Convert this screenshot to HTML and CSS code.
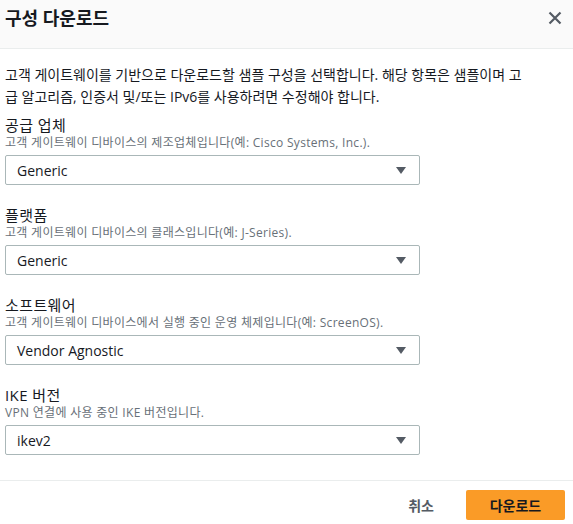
FILE: index.html
```html
<!DOCTYPE html>
<html lang="ko">
<head>
<meta charset="utf-8">
<link rel="stylesheet" href="styles.css">
</head>
<body>
<div class="modal">
  <div class="header">
    <h1 class="title">구성 다운로드</h1>
    <button class="close" aria-label="닫기">
      <svg width="14" height="14" viewBox="0 0 14 14"><path d="M1.5 1.5 L12.5 12.5 M12.5 1.5 L1.5 12.5" stroke="#545b64" stroke-width="2.2" fill="none"/></svg>
    </button>
  </div>
  <div class="content">
    <p class="desc">고객 게이트웨이를 기반으로 다운로드할 샘플 구성을 선택합니다. 해당 항목은 샘플이며 고급 알고리즘, 인증서 및/또는 IPv6를 사용하려면 수정해야 합니다.</p>
    <div class="field">
      <div class="label">공급 업체</div>
      <div class="hint">고객 게이트웨이 디바이스의 제조업체입니다(예: Cisco Systems, Inc.).</div>
      <div class="select"><span>Generic</span><span class="arrow"></span></div>
    </div>
    <div class="field">
      <div class="label">플랫폼</div>
      <div class="hint">고객 게이트웨이 디바이스의 클래스입니다(예: J-Series).</div>
      <div class="select"><span>Generic</span><span class="arrow"></span></div>
    </div>
    <div class="field">
      <div class="label">소프트웨어</div>
      <div class="hint">고객 게이트웨이 디바이스에서 실행 중인 운영 체제입니다(예: ScreenOS).</div>
      <div class="select"><span>Vendor Agnostic</span><span class="arrow"></span></div>
    </div>
    <div class="field">
      <div class="label">IKE 버전</div>
      <div class="hint">VPN 연결에 사용 중인 IKE 버전입니다.</div>
      <div class="select"><span>ikev2</span><span class="arrow"></span></div>
    </div>
  </div>
  <div class="footer">
    <button class="btn-link">취소</button>
    <button class="btn-primary">다운로드</button>
  </div>
</div>
</body>
</html>
```

FILE: styles.css
```css
* { box-sizing: border-box; }
body {
  margin: 0;
  background: #fff;
  color: #16191f;
  font-family: "Open Sans", "Noto Sans CJK KR", sans-serif;
}
.modal { width: 573px; }
.header {
  height: 49px;
  background: #fafafa;
  border-bottom: 1px solid #eaeded;
  display: flex;
  align-items: center;
  justify-content: space-between;
  padding: 0 11px 0 5px;
}
.title {
  margin: 0;
  font-size: 18px;
  font-weight: 700;
  line-height: 24px;
  margin-top: -12px;
}
.close {
  border: 0;
  background: transparent;
  padding: 0;
  width: 14px;
  height: 14px;
  display: flex;
  margin-top: -12px;
}
.content {
  padding: 15px 5px 0;
  height: 431px;
}
.desc {
  margin: 0 0 7px;
  max-width: 528px;
  font-size: 14px;
  line-height: 22px;
}
.field { margin-bottom: 20px; }
.label { font-size: 15px; line-height: 20px; letter-spacing: 0.4px; }
.hint { font-size: 12px; line-height: 16px; color: #687078; margin-bottom: 4px; letter-spacing: 0.3px; }
.select {
  width: 415px;
  height: 30px;
  border: 1px solid #aab7b8;
  border-radius: 2px;
  display: flex;
  align-items: center;
  justify-content: space-between;
  padding: 0 13px 0 11px;
  font-size: 14px;
}
.arrow {
  width: 0;
  height: 0;
  border-left: 5px solid transparent;
  border-right: 5px solid transparent;
  border-top: 7px solid #545b64;
}
.footer {
  border-top: 1px solid #eaeded;
  display: flex;
  justify-content: flex-end;
  align-items: center;
  gap: 32px;
  padding: 9px 8px 0 0;
}
.btn-link {
  border: 0;
  background: transparent;
  font: inherit;
  font-size: 14px;
  font-weight: 700;
  color: #545b64;
  padding: 0;
}
.btn-primary {
  width: 99px;
  height: 30px;
  border: 0;
  border-radius: 2px;
  background: #fa9b27;
  color: #16191f;
  font: inherit;
  font-size: 14px;
  font-weight: 700;
}
```
